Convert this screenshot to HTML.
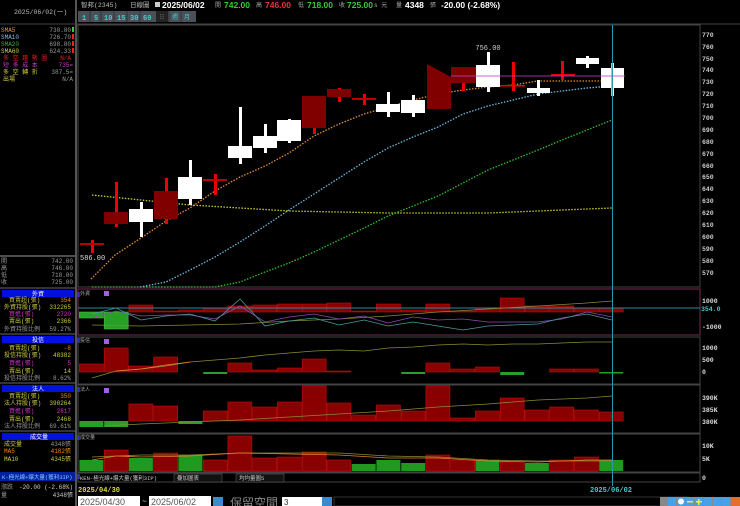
<!DOCTYPE html>
<html><head><meta charset="utf-8"><style>
html,body{margin:0;padding:0;background:#000;width:740px;height:506px;overflow:hidden}
svg{display:block;font-size:7px;font-family:"Liberation Mono","Noto Sans CJK TC",monospace}
.s{font-family:"Liberation Sans","Noto Sans CJK TC",sans-serif}
.b{font-weight:bold}
</style></head><body>
<svg width="740" height="506" viewBox="0 0 740 506" xmlns="http://www.w3.org/2000/svg">
<rect width="740" height="506" fill="#000"/>
<text x="14" y="14" fill="#bbb" font-size="6.5">2025/06/02(一)</text>
<text x="81" y="7" fill="#bbb" font-size="6.5">智邦(2345)</text>
<text x="130" y="7" fill="#bbb" font-size="6.5">日線圖</text>
<rect x="155" y="2" width="5" height="5" fill="#ccc"/>
<text x="162" y="8" fill="#fff" class="s b" font-size="8.5">2025/06/02</text>
<text x="215" y="7" fill="#aaa" font-size="6">開</text><text x="224" y="8" fill="#3c3" class="s b" font-size="8.5">742.00</text>
<text x="256" y="7" fill="#aaa" font-size="6">高</text><text x="265" y="8" fill="#e33" class="s b" font-size="8.5">746.00</text>
<text x="298" y="7" fill="#aaa" font-size="6">低</text><text x="307" y="8" fill="#3c3" class="s b" font-size="8.5">718.00</text>
<text x="339" y="7" fill="#aaa" font-size="6">收</text><text x="347" y="8" fill="#3c3" class="s b" font-size="8.5">725.00</text>
<text x="374" y="7" fill="#aaa" font-size="6">s 元</text>
<text x="396" y="7" fill="#aaa" font-size="6">量</text><text x="405" y="8" fill="#fff" class="s b" font-size="8.5">4348</text>
<text x="430" y="7" fill="#aaa" font-size="6">張</text><text x="441" y="8" fill="#fff" class="s b" font-size="8.5">-20.00 (-2.68%)</text>
<rect x="78" y="11" width="118" height="11" fill="#4a5058"/>
<g fill="#4cc" class="b" font-size="7">
<text x="82" y="20">1</text><text x="94" y="20">5</text><text x="104" y="20">10</text><text x="117" y="20">15</text><text x="130" y="20">30</text><text x="143" y="20">60</text></g>
<rect x="156" y="11" width="12" height="11" fill="#222"/>
<text x="159" y="19" fill="#555" font-size="6">日</text><text x="172" y="19" fill="#4cc" font-size="6">週</text><text x="184" y="19" fill="#4cc" font-size="6">月</text>
<g stroke="#333" stroke-width="1"><line x1="90" y1="11" x2="90" y2="22"/><line x1="101" y1="11" x2="101" y2="22"/><line x1="114" y1="11" x2="114" y2="22"/><line x1="127" y1="11" x2="127" y2="22"/><line x1="140" y1="11" x2="140" y2="22"/><line x1="169" y1="11" x2="169" y2="22"/><line x1="181" y1="11" x2="181" y2="22"/></g>
<rect x="75" y="0" width="2" height="506" fill="#555"/>
<line x1="0" y1="24" x2="740" y2="24" stroke="#444"/>
<g font-size="6">
<text x="1" y="32" fill="#e09040">SMA5</text><text x="71" y="32" fill="#999" text-anchor="end">730.80</text><rect x="72" y="27" width="2" height="5" fill="#3c3"/>
<text x="1" y="39" fill="#80b8e0">SMA10</text><text x="71" y="39" fill="#999" text-anchor="end">726.70</text><rect x="72" y="34" width="2" height="5" fill="#e22"/>
<text x="1" y="46" fill="#3a3">SMA20</text><text x="71" y="46" fill="#999" text-anchor="end">698.80</text><rect x="72" y="41" width="2" height="5" fill="#e22"/>
<text x="1" y="53" fill="#cc4">SMA60</text><text x="71" y="53" fill="#999" text-anchor="end">624.33</text><rect x="72" y="48" width="2" height="5" fill="#e22"/>
<text x="3" y="60" fill="#d22">多 空 趨 勢 圖</text><text x="71" y="60" fill="#d22" text-anchor="end">N/A</text>
<text x="3" y="67" fill="#c3c">短 多 成 本</text><text x="73" y="67" fill="#c3c" text-anchor="end">735=</text>
<text x="3" y="74" fill="#cc4">多 空 轉 折</text><text x="73" y="74" fill="#999" text-anchor="end">387.5=</text>
<text x="3" y="81" fill="#cc4">出場</text><text x="73" y="81" fill="#999" text-anchor="end">N/A</text>
</g>
<line x1="0" y1="256" x2="75" y2="256" stroke="#666" stroke-width="1.5"/>
<g font-size="6" fill="#999">
<text x="1" y="263">開</text><text x="73" y="263" text-anchor="end">742.00</text>
<text x="1" y="270">高</text><text x="73" y="270" text-anchor="end">746.00</text>
<text x="1" y="277">低</text><text x="73" y="277" text-anchor="end">718.00</text>
<text x="1" y="284">收</text><text x="73" y="284" text-anchor="end">725.00</text>
</g>
<g font-size="6">
<line x1="0" y1="288" x2="75" y2="288" stroke="#666"/>
<rect x="2" y="290" width="72" height="7" fill="#0010e0"/><text x="32" y="296" fill="#fff">外資</text>
<text x="9" y="302" fill="#cc4">買賣超(張)</text><text x="71" y="302" fill="#e80" text-anchor="end">354</text>
<text x="4" y="309" fill="#cc4">外資持股(張)</text><text x="71" y="309" fill="#cc4" text-anchor="end">332265</text>
<text x="9" y="316" fill="#c3c">買進(張)</text><text x="71" y="316" fill="#c3c" text-anchor="end">2720</text>
<text x="9" y="323" fill="#cc4">賣出(張)</text><text x="71" y="323" fill="#cc4" text-anchor="end">2366</text>
<text x="4" y="331" fill="#999">外資持股比例</text><text x="71" y="331" fill="#999" text-anchor="end">59.27%</text>
<line x1="0" y1="334" x2="75" y2="334" stroke="#666"/>
<rect x="2" y="336" width="72" height="7" fill="#0010e0"/><text x="32" y="342" fill="#fff">投信</text>
<text x="9" y="350" fill="#cc4">買賣超(張)</text><text x="71" y="350" fill="#e80" text-anchor="end">-8</text>
<text x="4" y="357" fill="#cc4">投信持股(張)</text><text x="71" y="357" fill="#cc4" text-anchor="end">48382</text>
<text x="9" y="365" fill="#c3c">買進(張)</text><text x="71" y="365" fill="#c3c" text-anchor="end">5</text>
<text x="9" y="373" fill="#cc4">賣出(張)</text><text x="71" y="373" fill="#cc4" text-anchor="end">14</text>
<text x="4" y="380" fill="#999">投信持股比例</text><text x="71" y="380" fill="#999" text-anchor="end">8.62%</text>
<line x1="0" y1="383" x2="75" y2="383" stroke="#666"/>
<rect x="2" y="385" width="72" height="7" fill="#0010e0"/><text x="32" y="391" fill="#fff">法人</text>
<text x="9" y="398" fill="#cc4">買賣超(張)</text><text x="71" y="398" fill="#e80" text-anchor="end">350</text>
<text x="4" y="405" fill="#cc4">法人持股(張)</text><text x="71" y="405" fill="#cc4" text-anchor="end">390264</text>
<text x="9" y="413" fill="#c3c">買進(張)</text><text x="71" y="413" fill="#c3c" text-anchor="end">2817</text>
<text x="9" y="421" fill="#cc4">賣出(張)</text><text x="71" y="421" fill="#cc4" text-anchor="end">2468</text>
<text x="4" y="428" fill="#999">法人持股比例</text><text x="71" y="428" fill="#999" text-anchor="end">69.61%</text>
<line x1="0" y1="431" x2="75" y2="431" stroke="#666"/>
<rect x="2" y="433" width="72" height="7" fill="#0010e0"/><text x="30" y="439" fill="#fff">成交量</text>
<text x="4" y="446" fill="#cc4">成交量</text><text x="71" y="446" fill="#999" text-anchor="end">4348張</text>
<text x="4" y="453" fill="#e80">MA5</text><text x="71" y="453" fill="#e80" text-anchor="end">4182張</text>
<text x="4" y="461" fill="#cc4">MA10</text><text x="71" y="461" fill="#cc4" text-anchor="end">4345張</text>
<rect x="0" y="472" width="75" height="9" fill="#0020a0"/><text x="2" y="479" fill="#8cf" font-size="5.5">K-極光線+爆大量(獲利3IP)</text>
<text x="1" y="489" fill="#999">漲跌</text><text x="73" y="489" fill="#ccc" text-anchor="end">-20.00 (-2.68%)</text>
<text x="1" y="497" fill="#999">量</text><text x="73" y="497" fill="#ccc" text-anchor="end">4348張</text>
</g>
<g>
<rect x="77" y="292" width="3" height="5" fill="#22f"/><rect x="77" y="338" width="3" height="5" fill="#22f"/><rect x="77" y="387" width="3" height="5" fill="#22f"/><rect x="77" y="435" width="3" height="5" fill="#22f"/><rect x="77" y="474" width="3" height="5" fill="#22f"/>
</g>
<rect x="78" y="25" width="622" height="262" fill="none" stroke="#444"/>
<g fill="#ccc" font-size="6.5" class="b">
<text x="702" y="37">770</text><text x="702" y="49">760</text><text x="702" y="61">750</text><text x="702" y="72">740</text><text x="702" y="84">730</text><text x="702" y="96">720</text><text x="702" y="108">710</text><text x="702" y="120">700</text><text x="702" y="132">690</text><text x="702" y="144">680</text><text x="702" y="156">670</text><text x="702" y="168">660</text><text x="702" y="179">650</text><text x="702" y="191">640</text><text x="702" y="203">630</text><text x="702" y="215">620</text><text x="702" y="227">610</text><text x="702" y="239">600</text><text x="702" y="251">590</text><text x="702" y="263">580</text><text x="702" y="275">570</text>
</g>
<g fill="none" stroke-width="1.3" stroke-dasharray="1.5 1.5">
<polyline stroke="#cccc30" points="92,195 141,200 190,205 240,208 289,211 339,212 388,213 438,213 488,213 538,211 587,209 612,208"/>
<polyline stroke="#2ec02e" points="92,287 215,287 240,282 265,272 289,263 314,252 339,240 364,228 388,216 413,206 438,196 463,183 488,170 513,160 538,150 562,140 587,130 612,120"/>
<polyline stroke="#6ab8e0" points="140,287 166,282 190,270 215,257 240,242 265,226 289,210 314,194 339,178 364,162 388,148 413,137 438,127 463,114 488,106 513,100 538,94 562,91 587,88 612,86"/>
<polyline stroke="#e09030" points="91,279 115,255 141,238 166,221 190,208 215,191 240,177 265,166 289,153 314,136 339,124 364,114 388,107 413,100 438,94 463,90 488,87 513,85 538,81 562,81 587,81 612,81"/>
</g>
<g>
<rect x="91" y="240" width="3" height="13" fill="#e00"/><rect x="80" y="243" width="24" height="2" fill="#b00"/>
<text x="80" y="260" fill="#ddd" font-size="7">586.00</text>
<rect x="115" y="182" width="3" height="45" fill="#e00"/><rect x="104" y="212" width="24" height="12" fill="#800000"/>
<rect x="140" y="202" width="3" height="35" fill="#fff"/><rect x="129" y="209" width="24" height="13" fill="#fff"/>
<rect x="165" y="178" width="3" height="46" fill="#e00"/><rect x="154" y="191" width="24" height="28" fill="#800000"/>
<rect x="189" y="160" width="3" height="45" fill="#fff"/><rect x="178" y="177" width="24" height="22" fill="#fff"/>
<rect x="214" y="174" width="3" height="21" fill="#e00"/><rect x="203" y="179" width="24" height="2" fill="#b00"/>
<rect x="239" y="107" width="3" height="57" fill="#fff"/><rect x="228" y="146" width="24" height="12" fill="#fff"/>
<rect x="264" y="124" width="3" height="29" fill="#fff"/><rect x="253" y="136" width="24" height="12" fill="#fff"/>
<rect x="288" y="119" width="3" height="24" fill="#fff"/><rect x="277" y="120" width="24" height="21" fill="#fff"/>
<rect x="313" y="96" width="3" height="38" fill="#e00"/><rect x="302" y="96" width="24" height="32" fill="#800000"/>
<rect x="338" y="88" width="3" height="14" fill="#e00"/><rect x="327" y="89" width="24" height="8" fill="#800000"/>
<rect x="363" y="94" width="3" height="11" fill="#e00"/><rect x="352" y="98" width="24" height="2" fill="#b00"/>
<rect x="387" y="92" width="3" height="25" fill="#fff"/><rect x="376" y="104" width="24" height="8" fill="#fff"/>
<rect x="412" y="95" width="3" height="22" fill="#fff"/><rect x="401" y="100" width="24" height="13" fill="#fff"/>
<polygon points="427,64 451,77 451,109 427,109" fill="#800000"/>
<rect x="462" y="83" width="3" height="8" fill="#e00"/><polygon points="451,67 476,67 476,83 451,83" fill="#800000"/>
<rect x="487" y="52" width="3" height="40" fill="#fff"/><rect x="476" y="65" width="24" height="22" fill="#fff"/>
<text x="488" y="50" fill="#ccc" text-anchor="middle" font-size="7">756.00</text>
<rect x="500" y="85" width="25" height="1.5" fill="#e00"/><rect x="512" y="62" width="3" height="29" fill="#e00"/>
<rect x="537" y="80" width="3" height="16" fill="#fff"/><rect x="527" y="88" width="23" height="5" fill="#fff"/>
<rect x="551" y="74" width="24" height="1.5" fill="#e00"/><rect x="561" y="61" width="3" height="19" fill="#e00"/>
<rect x="586" y="56" width="3" height="12" fill="#fff"/><rect x="576" y="58" width="23" height="6" fill="#fff"/>
<rect x="611" y="63" width="3" height="33" fill="#fff"/><rect x="601" y="68" width="23" height="20" fill="#fff"/>
<line x1="451" y1="76" x2="625" y2="76" stroke="#c040c0" stroke-opacity="0.8"/>
<line x1="612" y1="63" x2="612" y2="96" stroke="#e44"/>
</g>
<g fill="none" stroke="#444">
<rect x="78" y="289" width="622" height="46" stroke="#703050"/>
<rect x="78" y="337" width="622" height="47"/>
<rect x="78" y="385" width="622" height="48"/>
<rect x="78" y="434" width="622" height="38"/>
<rect x="78" y="473" width="622" height="9"/>
</g>
<g stroke="#c01010" stroke-width="0.6" fill="#8a0000">
<rect x="79.4" y="312" width="24" height="6" fill="#28a028" stroke="#40c040"/>
<rect x="104.2" y="312" width="24" height="17" fill="#28a028" stroke="#40c040"/>
<rect x="128.9" y="305" width="24" height="7"/><rect x="153.7" y="311" width="24" height="1"/><rect x="178.4" y="310" width="24" height="2"/><rect x="203.2" y="308" width="24" height="4"/><rect x="227.9" y="306" width="24" height="6"/><rect x="252.7" y="305" width="24" height="7"/><rect x="277.4" y="304" width="24" height="8"/><rect x="302.2" y="304" width="24" height="8"/><rect x="326.9" y="303" width="24" height="9"/><rect x="351.7" y="311" width="24" height="1"/><rect x="376.4" y="304" width="24" height="8"/><rect x="401.2" y="310" width="24" height="2"/><rect x="425.9" y="304" width="24" height="8"/><rect x="450.7" y="311" width="24" height="1"/><rect x="475.4" y="308" width="24" height="4"/><rect x="500.2" y="298" width="24" height="14"/><rect x="524.9" y="306" width="24" height="6"/><rect x="549.7" y="306" width="24" height="6"/><rect x="574.4" y="308" width="24" height="4"/><rect x="599.2" y="308" width="24" height="4"/>
</g>
<line x1="78" y1="308" x2="700" y2="308" stroke="#2a8a9a"/>
<g fill="none" stroke-width="0.8">
<polyline stroke="#8a8a30" points="92,325 141,326 190,325 240,324 289,321 339,319 388,316 438,312 488,309 538,306 587,303 612,301"/>
<polyline stroke="#8a4ab0" points="92,318 116,311 141,316 166,315 190,315 215,319 240,306 265,322 289,317 314,314 339,319 364,316 388,323 413,317 438,320 463,319 488,322 513,322 538,322 562,319 587,312 612,317"/>
<polyline stroke="#4a9a9a" points="92,314 116,308 141,320 166,316 190,314 215,321 240,299 265,326 289,321 314,318 339,325 364,320 388,326 413,322 438,326 463,330 488,326 513,325 538,324 562,318 587,314 612,320"/>
</g>
<text x="80" y="295" fill="#aaa" font-size="5">外資</text><rect x="104" y="291" width="5" height="5" fill="#a060e0"/>
<g fill="#ddd" font-size="6.5" class="b"><text x="702" y="303">1000</text><text x="702" y="329">-1000</text></g>
<text x="701" y="311" fill="#4cc" font-size="6.5" class="b">354.0</text>
<g stroke="#c01010" stroke-width="0.6" fill="#8a0000">
<rect x="79.4" y="364" width="24" height="8"/><rect x="104.2" y="348" width="24" height="24"/><rect x="128.9" y="366" width="24" height="6"/><rect x="153.7" y="357" width="24" height="15"/><rect x="227.9" y="363" width="24" height="9"/><rect x="252.7" y="370" width="24" height="2"/><rect x="277.4" y="368" width="24" height="4"/><rect x="302.2" y="359" width="24" height="13"/><rect x="326.9" y="371" width="24" height="1"/><rect x="425.9" y="363" width="24" height="9"/><rect x="450.7" y="369" width="24" height="3"/><rect x="475.4" y="367" width="24" height="5"/><rect x="549.7" y="369" width="24" height="3"/><rect x="574.4" y="369" width="24" height="3"/>
</g>
<g fill="#28a028"><rect x="203.2" y="372" width="24" height="2"/><rect x="401.2" y="372" width="24" height="2"/><rect x="500.2" y="372" width="24" height="3"/><rect x="599.2" y="372" width="24" height="1.5"/></g>
<g fill="none" stroke-width="0.8">
<polyline stroke="#8a8a30" points="92,378 116,371 141,369 166,366 190,362 215,360 240,358 265,355 289,353 314,351 339,350 364,351 388,348 413,347 438,345 463,344 488,345 513,344 538,344 562,343 587,342 612,342"/>
<polyline stroke="#e08030" points="116,371 141,369 166,365 190,362"/>
</g>
<text x="80" y="342" fill="#aaa" font-size="5">投信</text><rect x="104" y="339" width="5" height="5" fill="#a060e0"/>
<g fill="#ddd" font-size="6.5" class="b"><text x="702" y="350">1000</text><text x="702" y="362">500</text><text x="702" y="374">0</text></g>
<g stroke="#c01010" stroke-width="0.6" fill="#8a0000">
<rect x="128.9" y="404" width="24" height="17"/><rect x="153.7" y="406" width="24" height="15"/><rect x="203.2" y="411" width="24" height="10"/><rect x="227.9" y="402" width="24" height="19"/><rect x="252.7" y="407" width="24" height="14"/><rect x="277.4" y="402" width="24" height="19"/><rect x="302.2" y="386" width="24" height="35"/><rect x="326.9" y="403" width="24" height="18"/><rect x="351.7" y="415" width="24" height="6"/><rect x="376.4" y="405" width="24" height="16"/><rect x="401.2" y="411" width="24" height="10"/><rect x="425.9" y="386" width="24" height="35"/><rect x="450.7" y="418" width="24" height="3"/><rect x="475.4" y="411" width="24" height="10"/><rect x="500.2" y="398" width="24" height="23"/><rect x="524.9" y="410" width="24" height="11"/><rect x="549.7" y="407" width="24" height="14"/><rect x="574.4" y="410" width="24" height="11"/><rect x="599.2" y="412" width="24" height="9"/>
</g>
<g fill="#28a028"><rect x="79.4" y="421" width="24" height="6"/><rect x="104.2" y="421" width="24" height="6"/><rect x="178.4" y="421" width="24" height="3"/></g>
<polyline fill="none" stroke-width="0.8" stroke="#8a8a30" points="104,426 141,424 190,422 240,420 289,417 339,414 388,411 438,407 488,404 538,400 587,398 612,396"/>
<text x="80" y="391" fill="#aaa" font-size="5">法人</text><rect x="104" y="388" width="5" height="5" fill="#a060e0"/>
<g fill="#ddd" font-size="6.5" class="b"><text x="702" y="400">390K</text><text x="702" y="412">385K</text><text x="702" y="424">380K</text></g>
<g stroke="#c01010" stroke-width="0.6" fill="#8a0000">
<rect x="104.2" y="450" width="24" height="21"/><rect x="153.7" y="453" width="24" height="18"/><rect x="203.2" y="460" width="24" height="11"/><rect x="227.9" y="436" width="24" height="35"/><rect x="252.7" y="458" width="24" height="13"/><rect x="277.4" y="457" width="24" height="14"/><rect x="302.2" y="452" width="24" height="19"/><rect x="326.9" y="460" width="24" height="11"/><rect x="425.9" y="455" width="24" height="16"/><rect x="450.7" y="460" width="24" height="11"/><rect x="500.2" y="462" width="24" height="9"/><rect x="549.7" y="460" width="24" height="11"/><rect x="574.4" y="457" width="24" height="14"/>
</g>
<g fill="#1e9a1e"><rect x="79.4" y="460" width="24" height="11"/><rect x="128.9" y="458" width="24" height="13"/><rect x="178.4" y="455" width="24" height="16"/><rect x="351.7" y="464" width="24" height="7"/><rect x="376.4" y="460" width="24" height="11"/><rect x="401.2" y="463" width="24" height="8"/><rect x="475.4" y="460" width="24" height="11"/><rect x="524.9" y="463" width="24" height="8"/><rect x="599.2" y="460" width="24" height="11"/></g>
<polyline fill="none" stroke-width="0.8" stroke="#8a8a30" points="92,457 141,455 190,455 240,453 289,453 339,453 388,456 438,457 488,460 538,461 587,461 612,461"/>
<polyline fill="none" stroke-width="0.8" stroke="#e08030" points="92,460 116,456 141,457 190,456 240,453 289,454 339,455 388,458 438,458 488,461 538,462 587,460 612,460"/>
<text x="80" y="439" fill="#aaa" font-size="5">成交量</text>
<g fill="#ddd" font-size="6.5" class="b"><text x="702" y="448">10K</text><text x="702" y="461">5K</text><text x="702" y="480">0</text></g>
<text x="80" y="480" fill="#ccc" font-size="5.5">KEN-極光線+爆大量(獲利3IP)</text>
<rect x="174" y="474" width="48" height="8" fill="#111" stroke="#666" stroke-width="0.5"/><text x="177" y="480" fill="#ccc" font-size="5.5">疊加圖表</text>
<rect x="236" y="474" width="48" height="8" fill="#111" stroke="#666" stroke-width="0.5"/><text x="239" y="480" fill="#ccc" font-size="5.5">均均量圖5</text>
<line x1="612.5" y1="25" x2="612.5" y2="486" stroke="#2a9aaa"/>
<text x="78" y="492" fill="#dd4" font-size="7" class="b">2025/04/30</text>
<text x="590" y="492" fill="#4cc" font-size="7" class="b">2025/06/02</text>
<rect x="78" y="496" width="62" height="10" fill="#fff"/><text x="80" y="505" fill="#555" class="s" font-size="9">2025/04/30</text>
<text x="142" y="504" fill="#ccc" font-size="8">~</text>
<rect x="149" y="496" width="62" height="10" fill="#fff"/><text x="151" y="505" fill="#555" class="s" font-size="9">2025/06/02</text>
<rect x="213" y="497" width="10" height="9" fill="#3a8ad0"/>
<text x="230" y="507" fill="#888" class="s" font-size="12">保留空間</text>
<rect x="282" y="497" width="40" height="9" fill="#fff"/><text x="284" y="505" fill="#333" class="s" font-size="8">3</text>
<rect x="322" y="497" width="10" height="9" fill="#3a8ad0"/>
<rect x="334" y="497" width="355" height="9" fill="#000" stroke="#666" stroke-width="0.5"/>
<rect x="660" y="497" width="80" height="9" fill="#888"/>
<g fill="#4aa0e0"><rect x="668" y="497" width="8" height="9"/><rect x="677" y="497" width="8" height="9"/><rect x="686" y="497" width="8" height="9"/><rect x="695" y="497" width="8" height="9"/><rect x="704" y="497" width="8" height="9"/><rect x="713" y="497" width="8" height="9"/><rect x="722" y="497" width="8" height="9"/></g>
<rect x="731" y="497" width="9" height="9" fill="#e07030"/>
<circle cx="681" cy="501.5" r="3" fill="#fff"/><rect x="687" y="501" width="6" height="1.5" fill="#ee4"/><rect x="696" y="501" width="6" height="1.5" fill="#ee4"/><rect x="698" y="499" width="1.5" height="6" fill="#ee4"/>
</svg>
</body></html>
